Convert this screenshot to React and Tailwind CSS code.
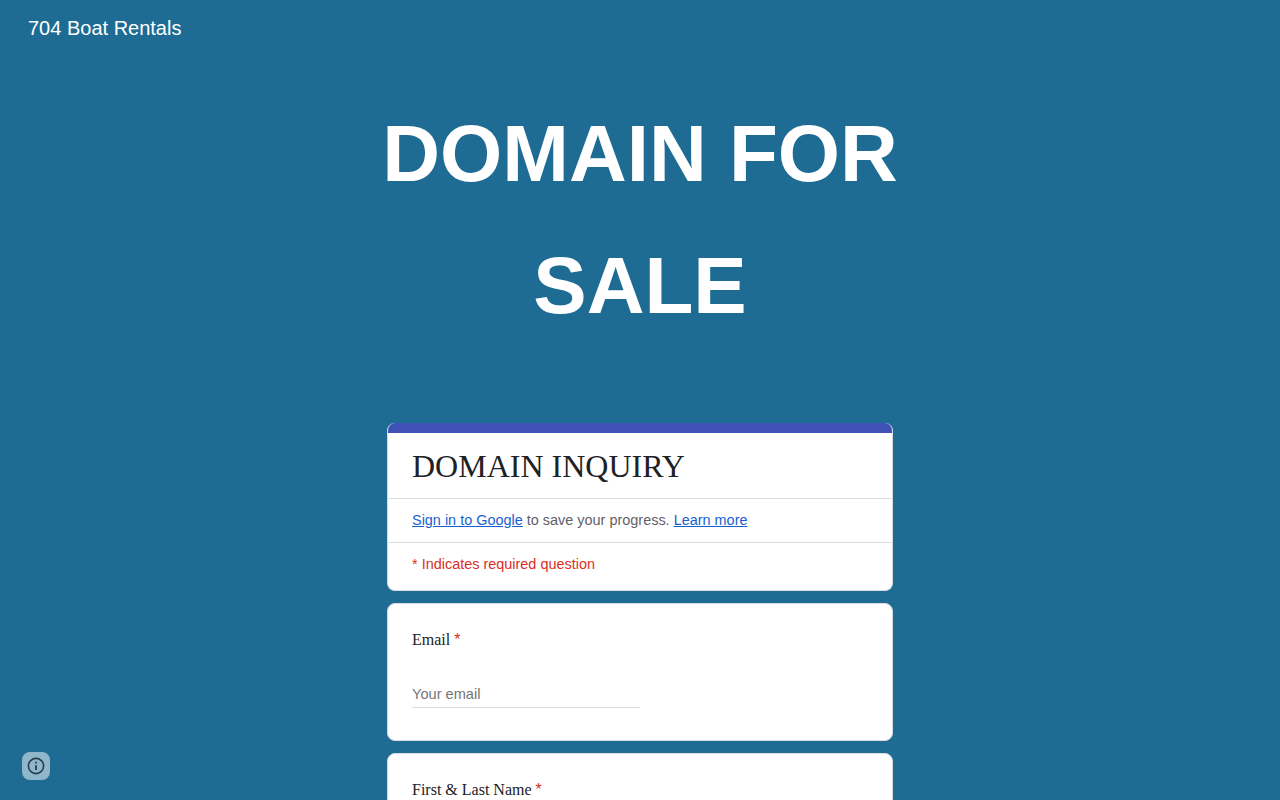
import React from "react";

const sans = "font-['Liberation_Sans',Arial,sans-serif]";
const serif = "font-['Liberation_Serif','Times_New_Roman',serif]";

const Question = ({ label, children, className }) => (
  <div className={`bg-white rounded-lg border border-[#dadce0] px-6 ${className}`}>
    <div className={`${serif} text-[16px] leading-6 text-[#202124]`}>
      {label} <span className={`${sans} text-[#d93025]`}>*</span>
    </div>
    {children}
  </div>
);

export default function App() {
  return (
    <div className={`${sans} relative h-screen overflow-hidden bg-[#1e6c94]`}>
      <header className="px-7 pt-[15px] text-[20px] leading-[26px] text-white">704 Boat Rentals</header>

      <h1 className="mt-[47px] text-center text-[80px] font-bold leading-[132px] text-white">
        DOMAIN FOR
        <br />
        SALE
      </h1>

      <main className="mt-[71px] mx-auto w-[506px] flex flex-col gap-3">
        <div className="bg-white rounded-lg border-x border-b border-[#dadce0] overflow-hidden">
          <div className="h-[10px] bg-[#3f51b5]"></div>
          <div className={`${serif} px-6 pt-[14px] pb-[13px] text-[32px] leading-[38px] text-[#202124] border-b border-[#dadce0]`}>
            DOMAIN INQUIRY
          </div>
          <div className="px-6 py-3 text-[14.45px] leading-[19px] text-[#5f6368] border-b border-[#dadce0]">
            <a href="#" className="text-[#1a5fd0] underline">Sign in to Google</a> to save your progress.{" "}
            <a href="#" className="text-[#1a5fd0] underline">Learn more</a>
          </div>
          <div className="px-6 pt-[11px] pb-[16px] text-[14.45px] leading-[20px] text-[#d93025]">* Indicates required question</div>
        </div>

        <Question label="Email" className="h-[138px] pt-6">
          <div className="mt-[33px] w-[228px] border-b border-[#dadce0] pb-[3px] text-[14.6px] leading-[19px] text-[#757575]">Your email</div>
        </Question>

        <Question label="First & Last Name" className="h-[138px] pt-6" />
      </main>

      <button className="absolute left-[22px] top-[752px] w-7 h-7 rounded-lg bg-[#8fb6ca] flex items-center justify-center">
        <svg width="18" height="18" viewBox="0 0 18 18" fill="none" stroke="#263f4e" strokeWidth="1.6">
          <circle cx="9" cy="9" r="7.6" />
          <path d="M9 8.2v4.8" strokeWidth="1.8" />
          <path d="M9 4.8v1.8" strokeWidth="1.8" />
        </svg>
      </button>
    </div>
  );
}
